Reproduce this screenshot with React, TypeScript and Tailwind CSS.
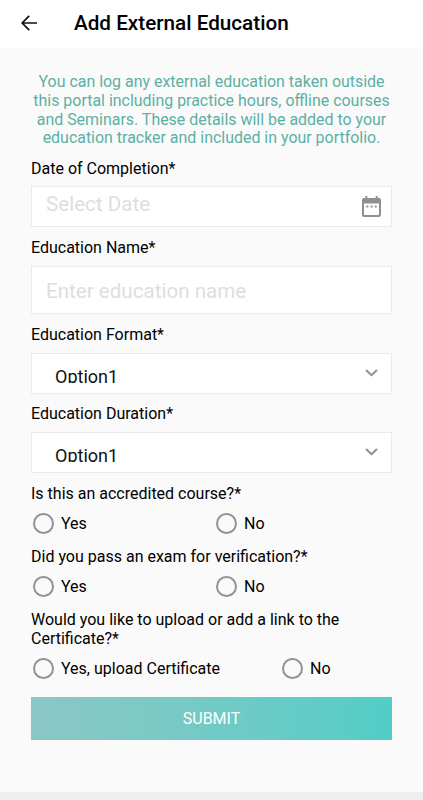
import { ReactNode } from "react";

const ACCREDITED = ["Yes", "No"];
const EXAM = ["Yes", "No"];

function Label({ children, className = "" }: { children: ReactNode; className?: string }) {
  return <div className={`text-[16px] leading-[19px] text-black ${className}`}>{children}</div>;
}

function Select({ value }: { value: string }) {
  return (
    <button
      type="button"
      className="flex h-[41px] w-full items-start justify-between border border-[#ebebeb] bg-white pl-[23px] pr-[13px] pt-[12px] text-left"
    >
      <span className="h-[17px] overflow-hidden text-[18px] leading-[22px] text-[#111]">{value}</span>
      <svg width="13" height="8" viewBox="0 0 13 8" fill="none" className="mt-[3px]">
        <path d="M1 1l5.5 5.2L12 1" stroke="#8f8f8f" strokeWidth="2" />
      </svg>
    </button>
  );
}

function Radio({ label, className = "" }: { label: string; className?: string }) {
  return (
    <div className={`flex items-center gap-[7px] pl-[2px] ${className}`}>
      <span className="h-[21px] w-[21px] shrink-0 rounded-full border-2 border-[#929292]" />
      <span className="pt-px text-[16px] leading-[20px] text-black">{label}</span>
    </div>
  );
}

function RadioRow({ options }: { options: string[] }) {
  return (
    <div className="mt-[10px] flex">
      {options.map((option) => (
        <Radio key={option} label={option} className="w-[183px] shrink-0" />
      ))}
    </div>
  );
}

export default function App() {
  return (
    <div className="flex h-[800px] w-[423px] flex-col overflow-hidden bg-[#fafafa] font-['Roboto',sans-serif]">
      <header className="flex h-12 shrink-0 items-center bg-white pl-[21px]">
        <svg width="17" height="16" viewBox="0 0 17 16" fill="none" className="-mt-[3px]">
          <path d="M8.2 .8L1.2 8l7 7.2M1.2 8H16" stroke="#111" strokeWidth="1.7" />
        </svg>
        <h1 className="-mt-[2px] ml-[36px] text-[20.7px] font-medium leading-6 text-black">
          Add External Education
        </h1>
      </header>

      <main className="flex-1 pl-[31px] pr-[31px] pt-[25px]">
        <p className="-mx-1 text-center text-[15.95px] leading-[18.75px] text-[#5cb0a4]">
          You can log any external education taken outside
          <br />
          this portal including practice hours, offline courses
          <br />
          and Seminars. These details will be added to your
          <br />
          education tracker and included in your portfolio.
        </p>

        <Label className="mt-[11px]">Date of Completion*</Label>
        <div className="mt-[8px] flex h-[41px] items-start justify-between border border-[#ebebeb] bg-white pl-[14px] pr-[10px]">
          <span className="mt-[5px] text-[20.6px] leading-6 text-[#dedede]">Select Date</span>
          <svg width="19" height="21" viewBox="0 0 19 21" className="mt-[9px]">
            <path
              fill="#8f8f8f"
              fillRule="evenodd"
              d="M3.3 0h2v2h8.4V0h2v2H17a2 2 0 0 1 2 2v15a2 2 0 0 1-2 2H2a2 2 0 0 1-2-2V4a2 2 0 0 1 2-2h1.3zM2 7.4V19h15V7.4z"
            />
            <path fill="#8f8f8f" d="M4.3 9.6h2v2h-2zM8.5 9.6h2v2h-2zM12.7 9.6h2v2h-2z" />
          </svg>
        </div>

        <Label className="mt-[11px]">Education Name*</Label>
        <div className="mt-[9px] flex h-[48px] items-center border border-[#ebebeb] bg-white pl-[14px] pt-px">
          <span className="text-[20.6px] leading-6 text-[#dedede]">Enter education name</span>
        </div>

        <Label className="mb-[9px] mt-[11px]">Education Format*</Label>
        <Select value="Option1" />

        <Label className="mb-[9px] mt-[10px]">Education Duration*</Label>
        <Select value="Option1" />

        <Label className="mt-[11px]">Is this an accredited course?*</Label>
        <RadioRow options={ACCREDITED} />

        <Label className="mt-[13px]">Did you pass an exam for verification?*</Label>
        <RadioRow options={EXAM} />

        <Label className="mt-[13px]">
          Would you like to upload or add a link to the
          <br />
          Certificate?*
        </Label>
        <div className="mt-[10px] flex">
          <Radio label="Yes, upload Certificate" className="w-[249px]" />
          <Radio label="No" />
        </div>

        <button
          type="button"
          className="mt-[18px] h-[43px] w-full bg-gradient-to-r from-[#8bc7c4] to-[#52cdc7] pt-px text-[16px] text-white"
        >
          SUBMIT
        </button>
      </main>

      <div className="h-2 shrink-0 bg-[#efefef]" />
    </div>
  );
}
